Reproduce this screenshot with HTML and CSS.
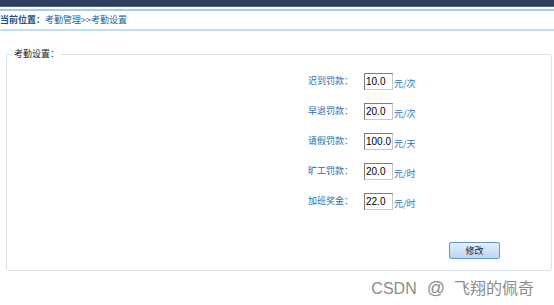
FILE: index.html
```html
<!DOCTYPE html>
<html lang="zh-CN">
<head>
<meta charset="utf-8">
<title>考勤设置</title>
<link rel="stylesheet" href="styles.css">
</head>
<body>
<div class="topbar"></div>
<div class="crumb"><span class="crumb-inner"><b class="here">当前位置：</b>考勤管理&gt;&gt;考勤设置</span></div>
<div class="main">
  <fieldset class="box">
    <legend class="legend">考勤设置：</legend>
    <div class="content">
      <div class="rows">
        <div class="row"><span class="label">迟到罚款：</span><input class="num" type="text" value="10.0"><span class="unit">元/次</span></div>
        <div class="row"><span class="label">早退罚款：</span><input class="num" type="text" value="20.0"><span class="unit">元/次</span></div>
        <div class="row"><span class="label">请假罚款：</span><input class="num" type="text" value="100.0"><span class="unit">元/天</span></div>
        <div class="row"><span class="label">旷工罚款：</span><input class="num" type="text" value="20.0"><span class="unit">元/时</span></div>
        <div class="row"><span class="label">加班奖金：</span><input class="num" type="text" value="22.0"><span class="unit">元/时</span></div>
      </div>
      <div class="actions"><button class="btn" type="button">修改</button></div>
    </div>
  </fieldset>
  <div class="mark">CSDN<span class="mark-at">@</span><span class="mark-cn">飞翔的佩奇</span></div>
</div>
</body>
</html>
```
FILE: styles.css
```css
html, body {
  margin: 0;
  padding: 0;
  background: #ffffff;
}
body {
  font-family: "Noto Sans CJK SC", "Liberation Sans", sans-serif;
  font-size: 9px;
  color: #333333;
}
.topbar {
  height: 6px;
  background: #2c3f60;
  border-bottom: 1px solid #56688a;
}
.crumb {
  margin-top: 2px;
  border-top: 2px solid #a3cdec;
  border-bottom: 2px solid #c0ddf2;
  height: 18px;
  line-height: 18px;
  color: #2a6096;
  white-space: nowrap;
}
.crumb-inner {
  display: inline-block;
}
.here {
  color: #1d4f80;
  font-weight: bold;
}
.main {
  padding: 0 2px 0 6px;
}
.box {
  margin: 16px 0 0 0;
  padding: 0;
  border: 1px solid #d8e2ea;
  border-radius: 3px;
  min-width: 0;
}
.legend {
  margin-left: 5px;
  padding: 0 2px;
  line-height: 14px;
  height: 14px;
  color: #222222;
}
.content {
  height: 209px;
  box-sizing: border-box;
  padding-top: 5px;
}
.rows {
  display: flex;
  flex-direction: column;
}
.row {
  display: flex;
  align-items: center;
  height: 30px;
}
.label {
  width: 346px;
  text-align: right;
  margin-right: 11px;
  color: #2b6ea8;
  margin-top: -2px;
}
.num {
  box-sizing: border-box;
  width: 29px;
  height: 17px;
  margin: 0;
  padding: 0 0 0 1px;
  font-family: "Liberation Sans", Arial, sans-serif;
  font-size: 10px;
  color: #000000;
  background: #ffffff;
  border: 1px solid;
  border-color: #7b7b7b #c8c8c8 #c8c8c8 #7b7b7b;
  outline: none;
}
.unit {
  color: #2f72ad;
  margin-left: 1px;
  padding-top: 5px;
}
.actions {
  padding-left: 442px;
  margin-top: 26px;
  display: flex;
}
.btn {
  box-sizing: border-box;
  width: 51px;
  height: 17px;
  padding: 0;
  font-family: "Noto Sans CJK SC", sans-serif;
  font-size: 9px;
  color: #222222;
  background: linear-gradient(#e4effb, #bcd6f1);
  border: 1px solid #6596cc;
  border-radius: 2px;
}
.mark {
  text-align: right;
  padding-right: 18px;
  margin-top: 6px;
  font-family: "Liberation Sans", "Noto Sans CJK SC", sans-serif;
  font-size: 16px;
  line-height: 20px;
  color: #8c8c8c;
  text-shadow: 1px 1px 0 #ffffff;
}
.mark-at {
  margin-left: 10px;
  font-size: 18px;
}
.mark-cn {
  font-family: "Noto Sans CJK SC", sans-serif;
  margin-left: 9px;
}
```
